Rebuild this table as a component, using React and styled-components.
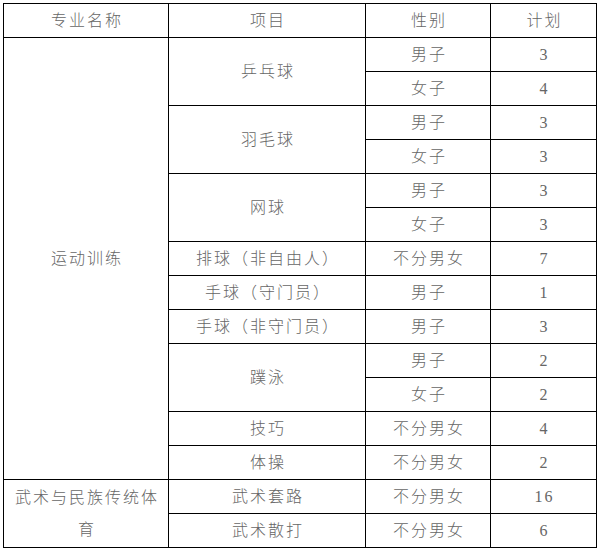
import React from "react";
import styled, { createGlobalStyle } from "styled-components";

const GlobalStyle = createGlobalStyle`
  body {
    margin: 0;
    background: #fff;
  }
`;

const rows = [
  { major: { name: "运动训练", span: 13 }, item: { name: "乒乓球", span: 2 }, sex: "男子", plan: "3" },
  { sex: "女子", plan: "4" },
  { item: { name: "羽毛球", span: 2 }, sex: "男子", plan: "3" },
  { sex: "女子", plan: "3" },
  { item: { name: "网球", span: 2 }, sex: "男子", plan: "3" },
  { sex: "女子", plan: "3" },
  { item: { name: "排球（非自由人）", span: 1 }, sex: "不分男女", plan: "7" },
  { item: { name: "手球（守门员）", span: 1 }, sex: "男子", plan: "1" },
  { item: { name: "手球（非守门员）", span: 1 }, sex: "男子", plan: "3" },
  { item: { name: "蹼泳", span: 2 }, sex: "男子", plan: "2" },
  { sex: "女子", plan: "2" },
  { item: { name: "技巧", span: 1 }, sex: "不分男女", plan: "4" },
  { item: { name: "体操", span: 1 }, sex: "不分男女", plan: "2" },
  { major: { name: "武术与民族传统体育", span: 2 }, item: { name: "武术套路", span: 1 }, sex: "不分男女", plan: "16" },
  { item: { name: "武术散打", span: 1 }, sex: "不分男女", plan: "6" },
];

function App() {
  return (
    <>
      <GlobalStyle />
      <Wrap>
        <Table>
          <colgroup>
            <col style={{ width: 165 }} />
            <col style={{ width: 197 }} />
            <col style={{ width: 125 }} />
            <col style={{ width: 106 }} />
          </colgroup>
          <thead>
            <tr>
              <Head>专业名称</Head>
              <Head>项目</Head>
              <Head>性别</Head>
              <Head>计划</Head>
            </tr>
          </thead>
          <tbody>
            {rows.map((r, i) => (
              <tr key={i}>
                {r.major && <Major rowSpan={r.major.span}>{r.major.name}</Major>}
                {r.item && <Cell rowSpan={r.item.span}>{r.item.name}</Cell>}
                <Cell>{r.sex}</Cell>
                <Cell>{r.plan}</Cell>
              </tr>
            ))}
          </tbody>
        </Table>
      </Wrap>
    </>
  );
}

const Wrap = styled.div`
  padding: 3px 0 0 3px;
`;

const Table = styled.table`
  border-collapse: collapse;
  table-layout: fixed;
  width: 593px;
  font-family: "Liberation Serif", "Noto Sans CJK SC", serif;
  font-size: 16px;
  font-weight: 300;
  color: #666;
`;

const Cell = styled.td`
  height: 33px;
  padding: 0 0 0 2px;
  border: 1px solid #000;
  text-align: center;
  vertical-align: middle;
  letter-spacing: 2px;
  line-height: 20px;
  white-space: nowrap;
`;

const Head = styled(Cell).attrs({ as: "th" })`
  font-weight: 300;
`;

const Major = styled(Cell)`
  white-space: normal;
  line-height: 32px;
  padding: 0 4px 0 6px;
`;

export default App;
